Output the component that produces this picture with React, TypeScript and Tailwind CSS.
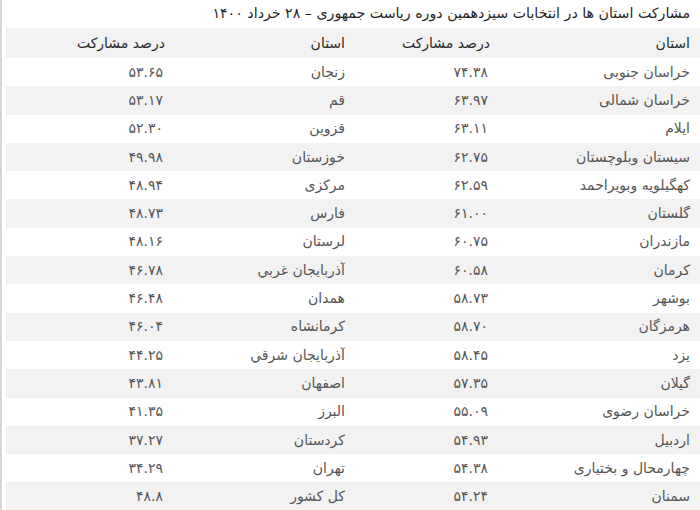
const rows: [string, string, string, string][] = [
  ["خراسان جنوبی", "۷۴.۳۸", "زنجان", "۵۳.۶۵"],
  ["خراسان شمالی", "۶۳.۹۷", "قم", "۵۳.۱۷"],
  ["ایلام", "۶۳.۱۱", "قزوین", "۵۲.۳۰"],
  ["سیستان وبلوچستان", "۶۲.۷۵", "خوزستان", "۴۹.۹۸"],
  ["کهگیلویه وبویراحمد", "۶۲.۵۹", "مرکزی", "۴۸.۹۴"],
  ["گلستان", "۶۱.۰۰", "فارس", "۴۸.۷۳"],
  ["مازندران", "۶۰.۷۵", "لرستان", "۴۸.۱۶"],
  ["کرمان", "۶۰.۵۸", "آذربایجان غربي", "۴۶.۷۸"],
  ["بوشهر", "۵۸.۷۳", "همدان", "۴۶.۴۸"],
  ["هرمزگان", "۵۸.۷۰", "کرمانشاه", "۴۶.۰۴"],
  ["یزد", "۵۸.۴۵", "آذربایجان شرقي", "۴۴.۲۵"],
  ["گیلان", "۵۷.۳۵", "اصفهان", "۴۳.۸۱"],
  ["خراسان رضوی", "۵۵.۰۹", "البرز", "۴۱.۳۵"],
  ["اردبیل", "۵۴.۹۳", "کردستان", "۳۷.۲۷"],
  ["چهارمحال و بختیاری", "۵۴.۳۸", "تهران", "۳۴.۲۹"],
  ["سمنان", "۵۴.۲۴", "کل کشور", "۴۸.۸"],
];

export default function App() {
  return (
    <div
      dir="rtl"
      className="w-[700px] h-[510px] overflow-hidden bg-white border-l-2 border-[#d6d6d6] pl-[4px]"
      style={{ fontFamily: '"DejaVu Sans", "Noto Sans", sans-serif' }}
    >
      <div className="h-[28px] flex items-center pr-[10px] text-[14.2px] text-[#1f1f1f]">
        مشارکت استان ها در انتخابات سیزدهمین دوره ریاست جمهوری – ۲۸ خرداد ۱۴۰۰
      </div>
      <table className="w-full border-collapse text-[14px] text-[#555]">
        <thead>
          <tr className="bg-[#f2f2f2] h-[30px] text-[#2a2a2a]">
            <th className="w-[200px] text-right pr-[10px] font-medium">استان</th>
            <th className="w-[155px] text-right pr-[10px] font-medium">درصد مشارکت</th>
            <th className="w-[170px] text-right font-medium">استان</th>
            <th className="text-right pr-[10px] font-medium">درصد مشارکت</th>
          </tr>
        </thead>
        <tbody>
          {rows.map((r, i) => (
            <tr key={i} className={`h-[28.3px] ${i % 2 === 1 ? "bg-[#f2f2f2]" : "bg-white"}`}>
              <td className="text-right pr-[10px]">{r[0]}</td>
              <td className="text-right pr-[12px]">{r[1]}</td>
              <td className="text-right">{r[2]}</td>
              <td className="text-right pr-[12px]">{r[3]}</td>
            </tr>
          ))}
        </tbody>
      </table>
    </div>
  );
}
